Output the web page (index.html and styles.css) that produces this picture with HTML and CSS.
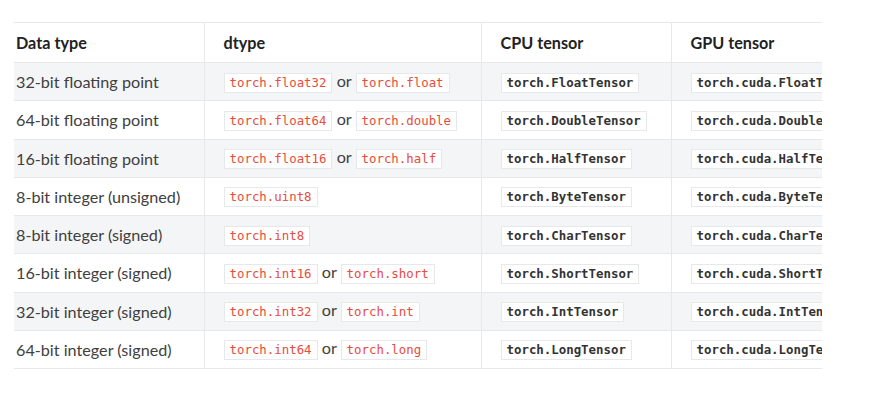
FILE: index.html
```html
<!DOCTYPE html>
<html lang="en">
<head>
    <meta charset="UTF-8">
    <title>Tensor types</title>
    <link rel="stylesheet" href="styles.css">
</head>
<body>
    <div class="tbl-wrap">
        <table class="dtype-tbl">
            <thead>
                <tr>
                    <th class="col-type">Data type</th>
                    <th class="col-dtype">dtype</th>
                    <th class="col-cpu">CPU tensor</th>
                    <th class="col-gpu">GPU tensor</th>
                </tr>
            </thead>
            <tbody>
                <tr>
                    <td>32-bit floating point</td>
                    <td><code class="lit">torch.float32</code> or <code class="lit">torch.float</code></td>
                    <td><code class="cls">torch.FloatTensor</code></td>
                    <td><code class="cls">torch.cuda.FloatTensor</code></td>
                </tr>
                <tr>
                    <td>64-bit floating point</td>
                    <td><code class="lit">torch.float64</code> or <code class="lit">torch.double</code></td>
                    <td><code class="cls">torch.DoubleTensor</code></td>
                    <td><code class="cls">torch.cuda.DoubleTensor</code></td>
                </tr>
                <tr>
                    <td>16-bit floating point</td>
                    <td><code class="lit">torch.float16</code> or <code class="lit">torch.half</code></td>
                    <td><code class="cls">torch.HalfTensor</code></td>
                    <td><code class="cls">torch.cuda.HalfTensor</code></td>
                </tr>
                <tr>
                    <td>8-bit integer (unsigned)</td>
                    <td><code class="lit">torch.uint8</code></td>
                    <td><code class="cls">torch.ByteTensor</code></td>
                    <td><code class="cls">torch.cuda.ByteTensor</code></td>
                </tr>
                <tr>
                    <td>8-bit integer (signed)</td>
                    <td><code class="lit">torch.int8</code></td>
                    <td><code class="cls">torch.CharTensor</code></td>
                    <td><code class="cls">torch.cuda.CharTensor</code></td>
                </tr>
                <tr>
                    <td>16-bit integer (signed)</td>
                    <td><code class="lit">torch.int16</code> or <code class="lit">torch.short</code></td>
                    <td><code class="cls">torch.ShortTensor</code></td>
                    <td><code class="cls">torch.cuda.ShortTensor</code></td>
                </tr>
                <tr>
                    <td>32-bit integer (signed)</td>
                    <td><code class="lit">torch.int32</code> or <code class="lit">torch.int</code></td>
                    <td><code class="cls">torch.IntTensor</code></td>
                    <td><code class="cls">torch.cuda.IntTensor</code></td>
                </tr>
                <tr>
                    <td>64-bit integer (signed)</td>
                    <td><code class="lit">torch.int64</code> or <code class="lit">torch.long</code></td>
                    <td><code class="cls">torch.LongTensor</code></td>
                    <td><code class="cls">torch.cuda.LongTensor</code></td>
                </tr>
            </tbody>
        </table>
    </div>
</body>
</html>
```

FILE: styles.css
```css
*, *:before, *:after {
    margin: 0;
    padding: 0;
    box-sizing: border-box;
}
body {
    background: white;
    font-family: Lato, 'Open Sans', sans-serif;
    color: #404040;
    padding: 22px 0 0 14px;
}
.tbl-wrap {
    width: 808px;
    overflow: hidden;
}
.dtype-tbl {
    border-collapse: collapse;
    table-layout: fixed;
    width: 880px;
    border-top: 1px solid #e6e8e9;
}
.col-type {
    width: 190px;
}
.col-dtype {
    width: 277px;
}
.col-cpu {
    width: 190px;
}
.col-gpu {
    width: 223px;
}
.dtype-tbl th, .dtype-tbl td {
    height: 38.25px;
    padding: 0 10px 0 19px;
    text-align: left;
    vertical-align: middle;
    white-space: nowrap;
    font-size: 16.2px;
    border-bottom: 1px solid #e6e8e9;
    border-left: 1px solid #e6e8e9;
}
.dtype-tbl th {
    height: 40px;
    font-weight: bold;
    color: #222;
}
.dtype-tbl th:first-child, .dtype-tbl td:first-child {
    border-left: none;
    padding-left: 2px;
}
.dtype-tbl tbody tr:nth-child(odd) {
    background: #f4f5f6;
}
.dtype-tbl code {
    display: inline-block;
    height: 20px;
    line-height: 18px;
    padding: 0 5px;
    background: white;
    border: 1px solid #e6e8e9;
    font-family: 'DejaVu Sans Mono', monospace;
    font-size: 12.4px;
    vertical-align: middle;
}
.lit {
    color: #e74c3c;
}
.cls {
    color: #333;
    font-weight: bold;
}
```
